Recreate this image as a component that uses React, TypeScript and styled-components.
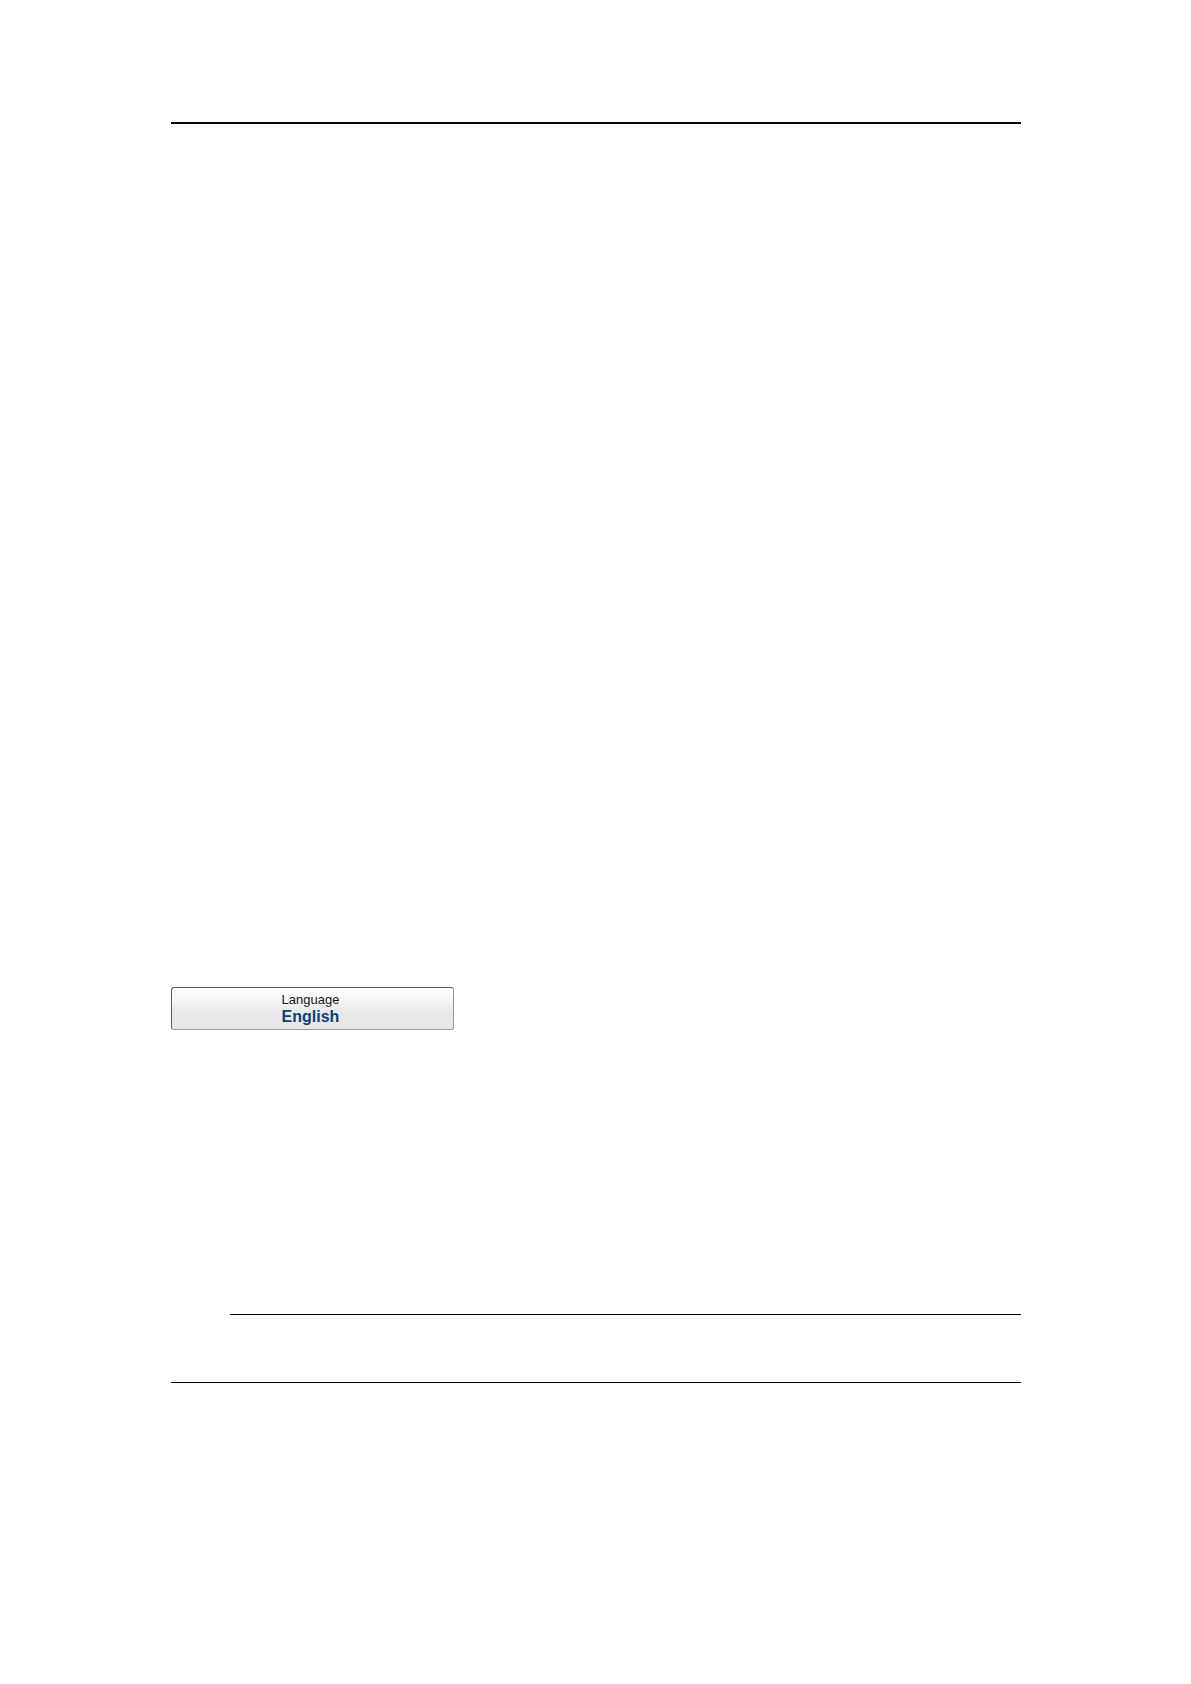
import React from "react";
import styled, { createGlobalStyle } from "styled-components";

const GlobalStyle = createGlobalStyle`
  body {
    margin: 0;
    background: #fff;
  }
`;

const Page = styled.main`
  display: flex;
  flex-direction: column;
  box-sizing: border-box;
  min-height: 100vh;
  padding: 122px 170px 0 171px;
  background: #fff;
  font-family: "Liberation Sans", Arial, sans-serif;
`;

const Rule = styled.hr<{ $weight?: number; $indent?: number }>`
  align-self: stretch;
  height: ${({ $weight = 1 }) => $weight}px;
  margin: 0 0 0 ${({ $indent = 0 }) => $indent}px;
  border: 0;
  background: #000;
`;

const Content = styled.section`
  padding: 863px 0 284px;
`;

const Footer = styled.footer`
  display: flex;
  flex-direction: column;
  gap: 67px;
`;

const LanguageButton = styled.button`
  display: flex;
  flex-direction: column;
  align-items: center;
  justify-content: center;
  box-sizing: border-box;
  width: 283px;
  height: 43px;
  padding: 0 4px 1px 0;
  border: 1px solid;
  border-color: #606060 #999 #999 #606060;
  border-radius: 3px;
  background: linear-gradient(#fff 0%, #f6f6f6 30%, #e8e8e8 60%, #e6e6e6 100%);
  font-family: inherit;
  line-height: 17px;
`;

const Caption = styled.span`
  color: #161616;
  font-size: 13px;
`;

const Value = styled.span`
  color: #103f73;
  font-size: 16px;
  font-weight: 700;
`;

export default function App() {
  return (
    <>
      <GlobalStyle />
      <Page>
        <Rule $weight={2} />
        <Content>
          <LanguageButton type="button">
            <Caption>Language</Caption>
            <Value>English</Value>
          </LanguageButton>
        </Content>
        <Footer>
          <Rule $indent={59} />
          <Rule />
        </Footer>
      </Page>
    </>
  );
}
